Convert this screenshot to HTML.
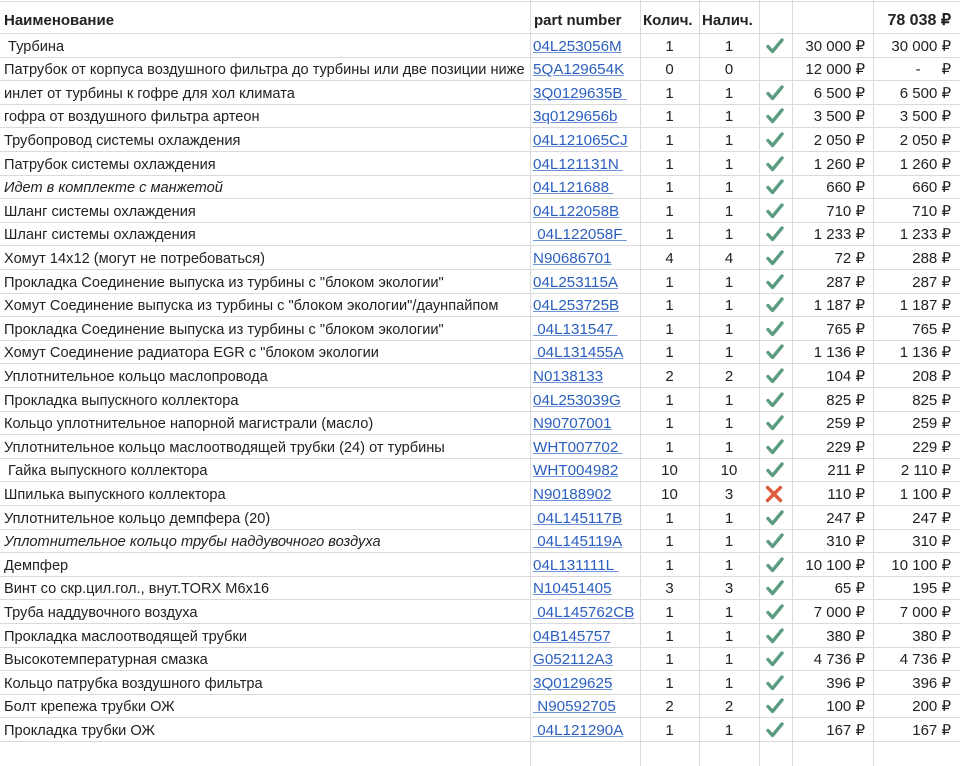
<!DOCTYPE html>
<html><head><meta charset="utf-8"><style>
body{margin:0;width:960px;height:766px;overflow:hidden;background:#fff;font-family:"Liberation Sans",Arial,sans-serif;font-size:14.6px;color:#222;}
.g{position:absolute;background:#dadada;}
.r{position:absolute;left:0;width:960px;height:23.6px;}
.c{position:absolute;top:0;height:23.6px;line-height:25px;white-space:nowrap;}
.a{left:4px;top:1px;}
.b{left:533px;color:#2a5fbf;text-decoration:underline;text-decoration-color:#6f94d8;font-size:15.2px;}
.q{left:640px;width:59px;text-align:center;font-size:15px;}
.n{left:699px;width:60px;text-align:center;font-size:15px;}
.e{left:759px;width:33px;}
.p{left:792px;width:73px;text-align:right;font-size:15px;}
.t{left:873px;width:78px;text-align:right;font-size:15px;}
.h{font-weight:bold;font-size:15px;}
i{font-style:italic;}
</style></head><body>
<div class="g" style="left:0;top:1px;width:960px;height:1px"></div>
<div class="g" style="left:0;top:33px;width:960px;height:1px"></div>
<div class="g" style="left:530px;top:0;width:1px;height:766px"></div>
<div class="g" style="left:640px;top:0;width:1px;height:766px"></div>
<div class="g" style="left:699px;top:0;width:1px;height:766px"></div>
<div class="g" style="left:759px;top:0;width:1px;height:766px"></div>
<div class="g" style="left:792px;top:0;width:1px;height:766px"></div>
<div class="g" style="left:873px;top:0;width:1px;height:766px"></div>
<div class="r" style="top:8px"><div class="c h" style="left:4px">Наименование</div><div class="c h" style="left:534px">part number</div><div class="c h" style="left:643px">Колич.</div><div class="c h" style="left:702px">Налич.</div><div class="c t h" style="font-size:16px">78 038 ₽</div></div>
<div id="rows"></div>
<script>
var d=[
[" Турбина","04L253056M",1,1,1,"30 000 ₽","30 000 ₽"],
["Патрубок от корпуса воздушного фильтра до турбины или две позиции ниже","5QA129654K",0,0,0,"12 000 ₽","-&nbsp;&nbsp;&nbsp;&nbsp;&nbsp;₽"],
["инлет от турбины к гофре для хол климата","3Q0129635B ",1,1,1,"6 500 ₽","6 500 ₽"],
["гофра от воздушного фильтра артеон","3q0129656b",1,1,1,"3 500 ₽","3 500 ₽"],
["Трубопровод системы охлаждения","04L121065CJ",1,1,1,"2 050 ₽","2 050 ₽"],
["Патрубок системы охлаждения","04L121131N ",1,1,1,"1 260 ₽","1 260 ₽"],
["<i>Идет в комплекте с манжетой</i>","04L121688 ",1,1,1,"660 ₽","660 ₽"],
["Шланг системы охлаждения","04L122058B",1,1,1,"710 ₽","710 ₽"],
["Шланг системы охлаждения"," 04L122058F ",1,1,1,"1 233 ₽","1 233 ₽"],
["Хомут 14x12 (могут не потребоваться)","N90686701",4,4,1,"72 ₽","288 ₽"],
["Прокладка Соединение выпуска из турбины с \"блоком экологии\"","04L253115A",1,1,1,"287 ₽","287 ₽"],
["Хомут Соединение выпуска из турбины с \"блоком экологии\"/даунпайпом","04L253725B",1,1,1,"1 187 ₽","1 187 ₽"],
["Прокладка Соединение выпуска из турбины с \"блоком экологии\""," 04L131547 ",1,1,1,"765 ₽","765 ₽"],
["Хомут Соединение радиатора EGR с \"блоком экологии"," 04L131455A",1,1,1,"1 136 ₽","1 136 ₽"],
["Уплотнительное кольцо маслопровода","N0138133",2,2,1,"104 ₽","208 ₽"],
["Прокладка выпускного коллектора","04L253039G",1,1,1,"825 ₽","825 ₽"],
["Кольцо уплотнительное напорной магистрали (масло)","N90707001",1,1,1,"259 ₽","259 ₽"],
["Уплотнительное кольцо маслоотводящей трубки (24) от турбины","WHT007702 ",1,1,1,"229 ₽","229 ₽"],
[" Гайка выпускного коллектора","WHT004982",10,10,1,"211 ₽","2 110 ₽"],
["Шпилька выпускного коллектора","N90188902",10,3,2,"110 ₽","1 100 ₽"],
["Уплотнительное кольцо демпфера (20)"," 04L145117B",1,1,1,"247 ₽","247 ₽"],
["<i>Уплотнительное кольцо трубы наддувочного воздуха</i>"," 04L145119A",1,1,1,"310 ₽","310 ₽"],
["Демпфер","04L131111L ",1,1,1,"10 100 ₽","10 100 ₽"],
["Винт со скр.цил.гол., внут.TORX M6x16","N10451405",3,3,1,"65 ₽","195 ₽"],
["Труба наддувочного воздуха"," 04L145762CB",1,1,1,"7 000 ₽","7 000 ₽"],
["Прокладка маслоотводящей трубки","04B145757",1,1,1,"380 ₽","380 ₽"],
["Высокотемпературная смазка","G052112A3",1,1,1,"4 736 ₽","4 736 ₽"],
["Кольцо патрубка воздушного фильтра","3Q0129625",1,1,1,"396 ₽","396 ₽"],
["Болт крепежа трубки ОЖ"," N90592705",2,2,1,"100 ₽","200 ₽"],
["Прокладка трубки ОЖ"," 04L121290A",1,1,1,"167 ₽","167 ₽"]];
var ck='<svg width="20" height="18" viewBox="0 0 20 18" style="position:absolute;left:6px;top:3px"><path d="M3 9.5 L7.5 14.5 L17 3" fill="none" stroke="#5c9c80" stroke-width="3.4" stroke-linecap="round" stroke-linejoin="round"/></svg>';
var xx='<svg width="20" height="18" viewBox="0 0 20 18" style="position:absolute;left:5px;top:3px"><path d="M3.5 2.5 L16.5 15.5 M16.5 2.5 L3.5 15.5" stroke="#de5a3c" stroke-width="3.4" stroke-linecap="round"/></svg>';
var h='';
for(var i=0;i<d.length;i++){var r=d[i],y=33+i*23.6;
h+='<div class="g" style="left:0;top:'+(y+23.6).toFixed(1)+'px;width:960px;height:1px"></div>';
h+='<div class="r" style="top:'+(y+0.5).toFixed(1)+'px"><div class="c a">'+r[0].replace(/^ /,'&nbsp;')+'</div><div class="c b">'+r[1].replace(/ /g,'&nbsp;')+'</div><div class="c q">'+r[2]+'</div><div class="c n">'+r[3]+'</div><div class="c e">'+(r[4]==1?ck:r[4]==2?xx:'')+'</div><div class="c p">'+r[5]+'</div><div class="c t">'+r[6]+'</div></div>';}
document.getElementById('rows').innerHTML=h;
</script>
</body></html>
